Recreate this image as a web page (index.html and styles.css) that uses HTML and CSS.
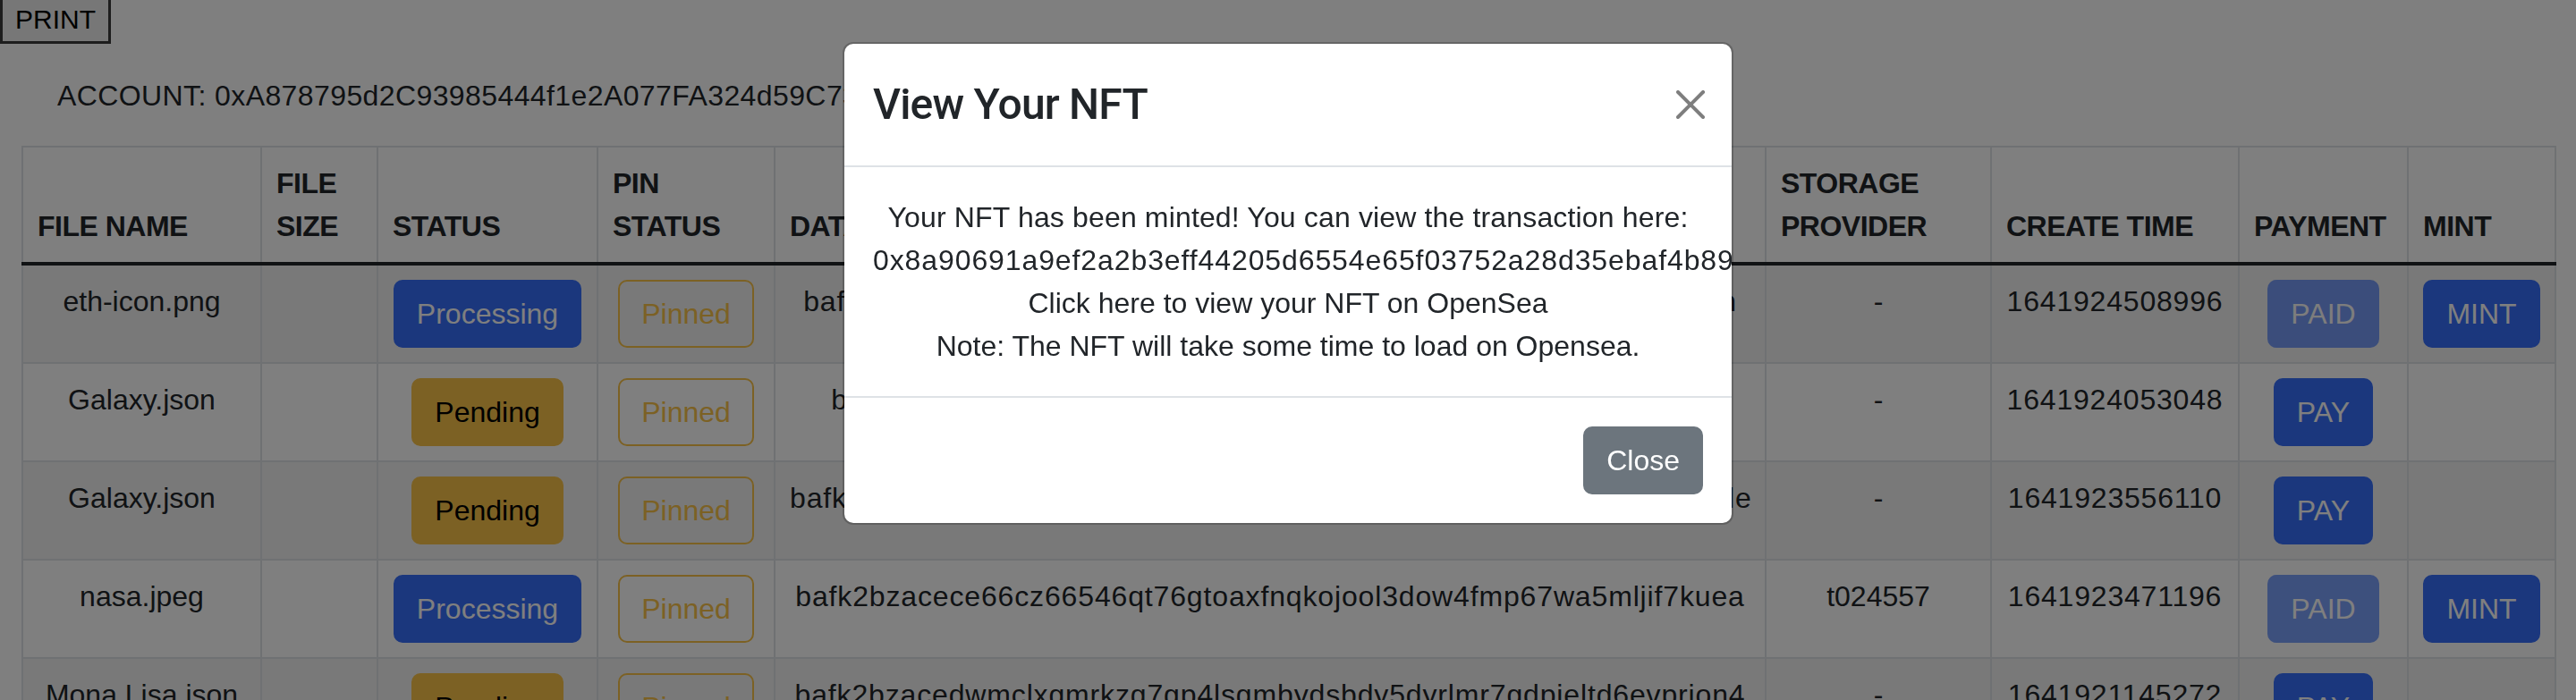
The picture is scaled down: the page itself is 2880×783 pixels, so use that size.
FILE: index.html
```html
<!DOCTYPE html>
<html lang="en">
<head>
<meta charset="utf-8">
<title>Files</title>
<link rel="stylesheet" href="styles.css">
</head>
<body>
<div class="page">
  <button class="print-btn">PRINT</button>
  <div class="main">
    <p class="account">ACCOUNT: 0xA878795d2C93985444f1e2A077FA324d59C73E1b</p>
    <table class="files">
      <colgroup>
        <col class="col-name"><col class="col-size"><col class="col-status"><col class="col-pin">
        <col class="col-cid"><col class="col-storage"><col class="col-time"><col class="col-pay"><col class="col-mint">
      </colgroup>
      <thead>
        <tr>
          <th>FILE NAME</th><th>FILE SIZE</th><th>STATUS</th><th>PIN STATUS</th><th>DATA CID</th>
          <th>STORAGE PROVIDER</th><th>CREATE TIME</th><th>PAYMENT</th><th>MINT</th>
        </tr>
      </thead>
      <tbody>
        <tr>
          <td>eth-icon.png</td><td></td>
          <td><span class="btn btn-primary">Processing</span></td>
          <td><span class="btn btn-outline-warning">Pinned</span></td>
          <td class="cid">bafk2bzacebuq3lx7dkgwvyhm5tq2fzeoa6nsjp4wr3ckhdizlvy7uxm6aen</td>
          <td>-</td><td class="num">1641924508996</td>
          <td><span class="btn btn-primary disabled">PAID</span></td>
          <td><span class="btn btn-primary">MINT</span></td>
        </tr>
        <tr>
          <td>Galaxy.json</td><td></td>
          <td><span class="btn btn-warning">Pending</span></td>
          <td><span class="btn btn-outline-warning">Pinned</span></td>
          <td class="cid">bafkreihdwdcefgh4dqkjv67uzcmw7ojee6edzdetojuzjevtenxquvyku</td>
          <td>-</td><td class="num">1641924053048</td>
          <td><span class="btn btn-primary">PAY</span></td>
          <td></td>
        </tr>
        <tr>
          <td>Galaxy.json</td><td></td>
          <td><span class="btn btn-warning">Pending</span></td>
          <td><span class="btn btn-outline-warning">Pinned</span></td>
          <td class="cid">bafk2bzacea3rkwrh7gtqyq2jhx4dzfz3lvn6mh5oyjqbndx2kgmwkqf7uxzde</td>
          <td>-</td><td class="num">1641923556110</td>
          <td><span class="btn btn-primary">PAY</span></td>
          <td></td>
        </tr>
        <tr>
          <td>nasa.jpeg</td><td></td>
          <td><span class="btn btn-primary">Processing</span></td>
          <td><span class="btn btn-outline-warning">Pinned</span></td>
          <td class="cid">bafk2bzacece66cz66546qt76gtoaxfnqkojool3dow4fmp67wa5mljif7kuea</td>
          <td>t024557</td><td class="num">1641923471196</td>
          <td><span class="btn btn-primary disabled">PAID</span></td>
          <td><span class="btn btn-primary">MINT</span></td>
        </tr>
        <tr>
          <td>Mona Lisa.json</td><td></td>
          <td><span class="btn btn-warning">Pending</span></td>
          <td><span class="btn btn-outline-warning">Pinned</span></td>
          <td class="cid">bafk2bzacedwmclxgmrkzg7gp4lsgmbydsbdy5dyrlmr7gdpjeltd6evprion4</td>
          <td>-</td><td class="num">1641921145272</td>
          <td><span class="btn btn-primary">PAY</span></td>
          <td></td>
        </tr>
      </tbody>
    </table>
  </div>
</div>

<div class="backdrop"></div>

<div class="modal">
  <div class="modal-dialog">
    <div class="modal-content">
      <div class="modal-header">
        <h4 class="modal-title">View Your NFT</h4>
        <button class="btn-close" aria-label="Close">
          <svg viewBox="0 0 16 16" width="32" height="32"><path d="M.293.293a1 1 0 0 1 1.414 0L8 6.586 14.293.293a1 1 0 1 1 1.414 1.414L9.414 8l6.293 6.293a1 1 0 0 1-1.414 1.414L8 9.414l-6.293 6.293a1 1 0 0 1-1.414-1.414L6.586 8 .293 1.707a1 1 0 0 1 0-1.414z"/></svg>
        </button>
      </div>
      <div class="modal-body">
        <p class="wide">Your NFT has been minted! You can view the transaction here:</p>
        <p class="hash">0x8a90691a9ef2a2b3eff44205d6554e65f03752a28d35ebaf4b89c3f21e7d0a6b</p>
        <p>Click here to view your NFT on OpenSea</p>
        <p>Note: The NFT will take some time to load on Opensea.</p>
      </div>
      <div class="modal-footer">
        <button class="btn btn-secondary">Close</button>
      </div>
    </div>
  </div>
</div>
</body>
</html>
```

FILE: styles.css
```css
html {
  overflow: hidden;
}

body {
  margin: 0;
  font-family: "Liberation Sans", Arial, sans-serif;
  font-size: 32px;
  line-height: 1.5;
  color: #212529;
  background: #fff;
}

.print-btn {
  display: block;
  box-sizing: border-box;
  height: 49px;
  margin: 0;
  padding: 0 14px 2px;
  font-family: inherit;
  font-size: 30px;
  line-height: 44px;
  color: #000;
  background: #efefef;
  border: 3px solid #3a3a3a;
  border-top: 0;
  border-radius: 0;
}

.main {
  padding: 0 24px;
}

.account {
  margin: 34px 0 32px;
  padding-left: 40px;
  letter-spacing: 0.4px;
}

/* table */
.files {
  width: 100%;
  table-layout: fixed;
  border-collapse: collapse;
}

.col-name { width: 267px; }
.col-size { width: 130px; }
.col-status { width: 246px; }
.col-pin { width: 198px; }
.col-cid { width: 1108px; }
.col-storage { width: 252px; }
.col-time { width: 277px; }
.col-pay { width: 189px; }
.col-mint { width: 165px; }

.files th,
.files td {
  padding: 16px;
  border: 2px solid #dee2e6;
}

.files th {
  text-align: left;
  vertical-align: bottom;
  font-weight: 700;
  letter-spacing: -0.5px;
}

.files tbody {
  border-top: 4px solid #212529;
}

.files td {
  text-align: center;
  vertical-align: top;
  white-space: nowrap;
}

.files td.cid {
  letter-spacing: 0.85px;
}

.files td.num {
  letter-spacing: 0.8px;
}

.files tbody tr:nth-child(odd) td {
  background: rgba(0, 0, 0, 0.05);
}

/* buttons */
.btn {
  display: inline-block;
  box-sizing: border-box;
  font-family: inherit;
  font-size: 32px;
  font-weight: 400;
  line-height: 48px;
  letter-spacing: 0;
  padding: 12px 24px;
  border: 2px solid transparent;
  border-radius: 10px;
}

.btn-primary {
  color: #fff;
  background: #366efa;
  border-color: #366efa;
}

.btn-primary.disabled {
  opacity: 0.65;
}

.btn-warning {
  color: #000;
  background: #f8c248;
  border-color: #f8c248;
}

.btn-outline-warning {
  color: #f8c248;
  border-color: #f8c248;
}

.btn-secondary {
  color: #fff;
  background: #6c757d;
  border-color: #6c757d;
}

/* modal */
.backdrop {
  position: fixed;
  inset: 0;
  background: rgba(0, 0, 0, 0.5);
}

.modal {
  position: fixed;
  inset: 0;
}

.modal-dialog {
  width: 996px;
  margin: 47px auto 0;
}

.modal-content {
  background: #fff;
  background-clip: padding-box;
  border: 2px solid rgba(0, 0, 0, 0.2);
  border-radius: 12px;
  overflow: hidden;
}

.modal-header {
  display: flex;
  align-items: center;
  justify-content: space-between;
  padding: 32px;
  border-bottom: 2px solid #dee2e6;
}

.modal-title {
  margin: 0;
  font-family: Roboto, "Liberation Sans", sans-serif;
  font-size: 48px;
  font-weight: 500;
  line-height: 72px;
  letter-spacing: -0.8px;
}

.btn-close {
  width: 32px;
  height: 32px;
  padding: 0;
  margin-right: -2px;
  border: 0;
  background: transparent;
  opacity: 0.5;
}

.btn-close svg {
  display: block;
  fill: #000;
}

.modal-body {
  padding: 32px;
  text-align: center;
  line-height: 48px;
}

.modal-body p {
  margin: 0;
}

.modal-body .wide {
  letter-spacing: 0.15px;
}

.hash {
  white-space: nowrap;
  letter-spacing: 0.9px;
}

.modal-footer {
  display: flex;
  justify-content: flex-end;
  padding: 32px;
  border-top: 2px solid #dee2e6;
}
```
